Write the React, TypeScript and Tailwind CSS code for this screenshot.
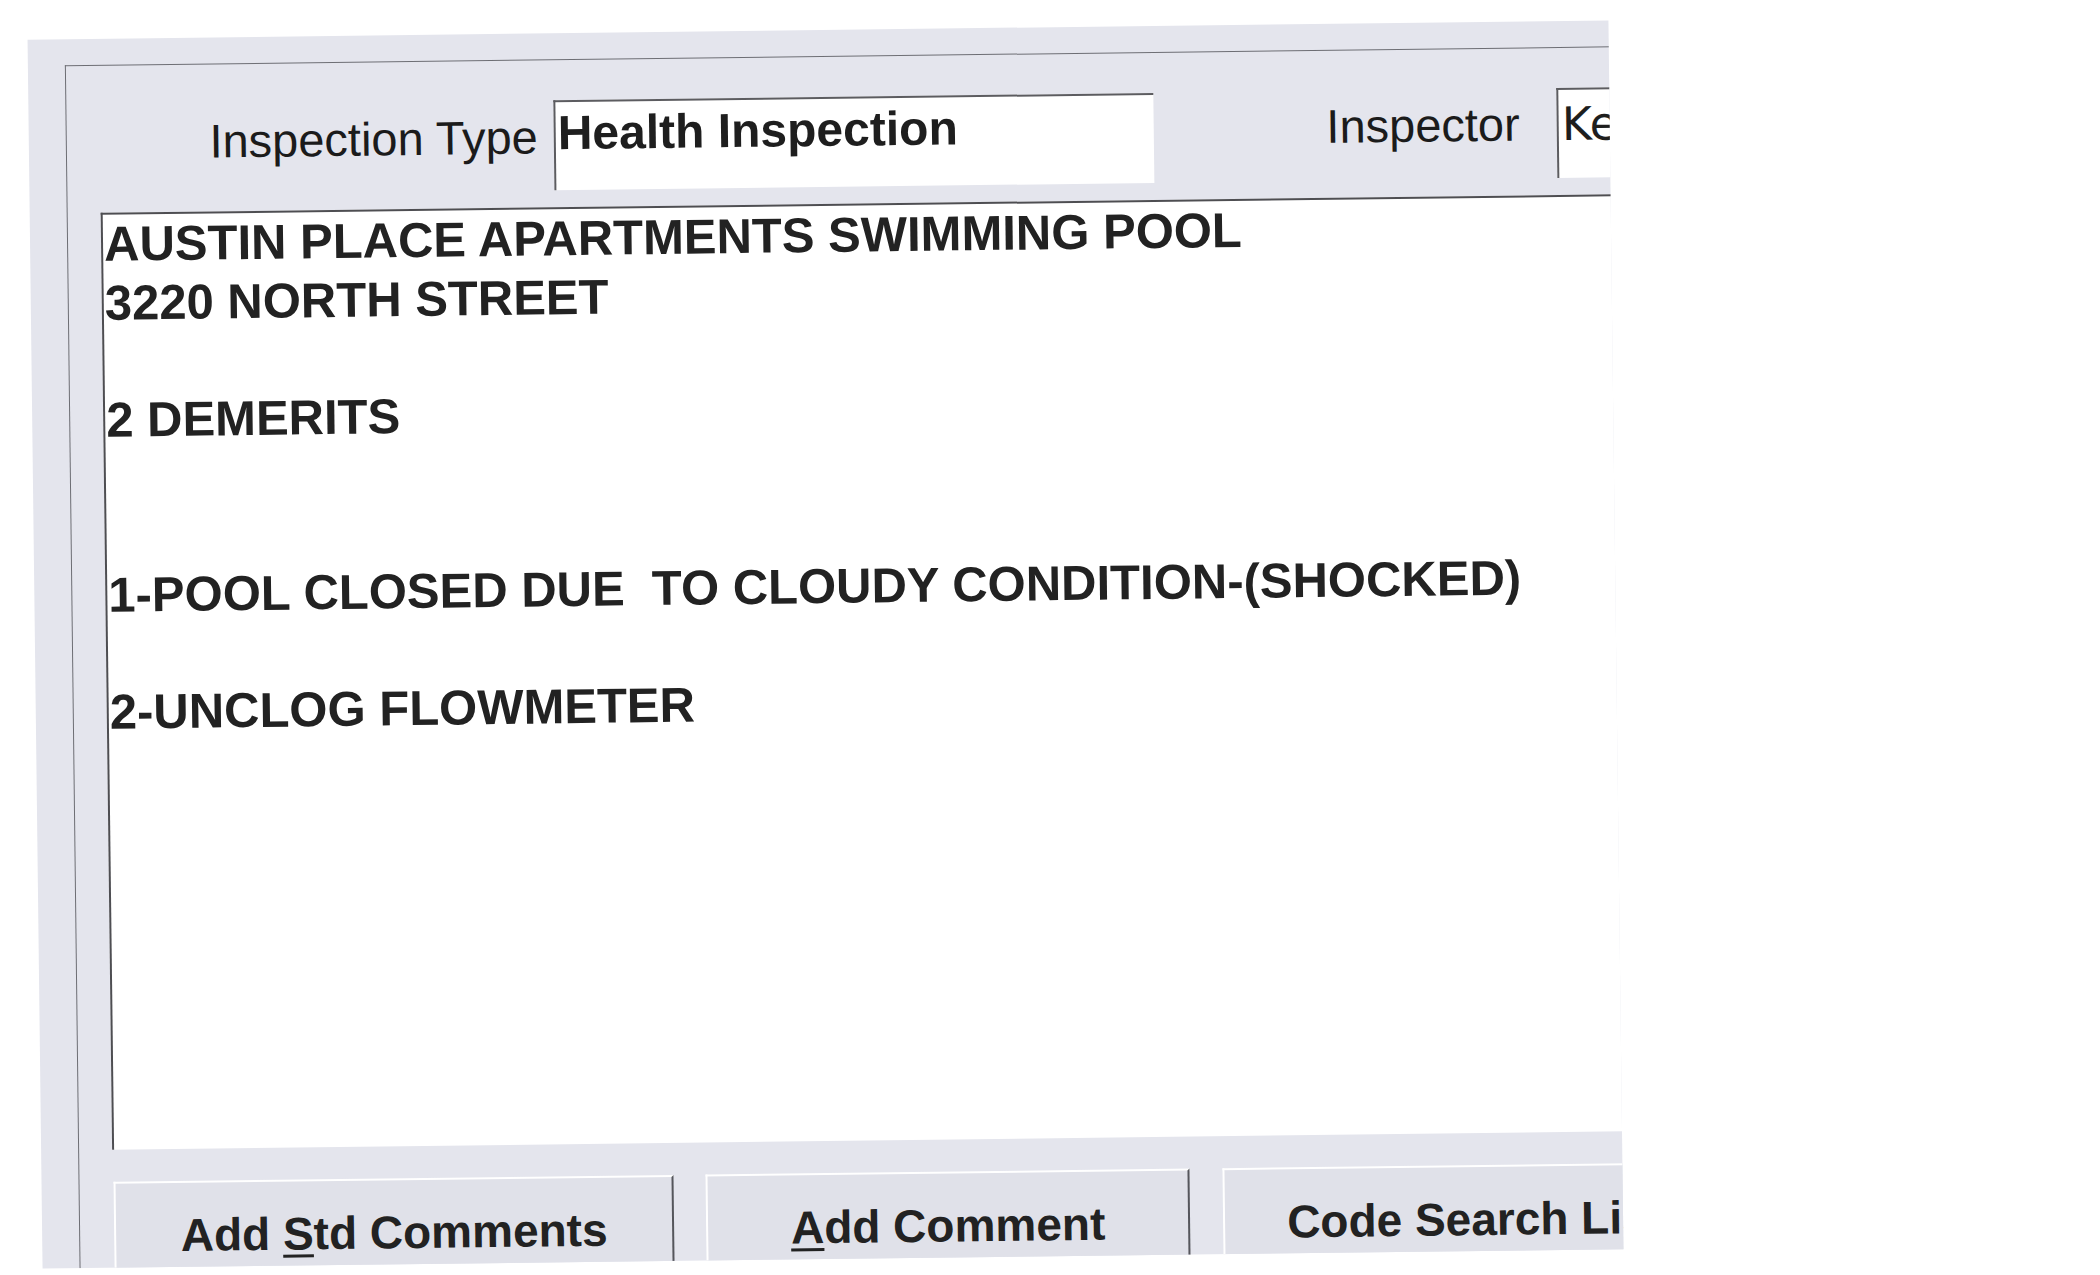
export default function App() {
  const lines = [
    "AUSTIN PLACE APARTMENTS SWIMMING POOL",
    "3220 NORTH STREET",
    "",
    "2 DEMERITS",
    "",
    "",
    "1-POOL CLOSED DUE  TO CLOUDY CONDITION-(SHOCKED)",
    "",
    "2-UNCLOG FLOWMETER",
  ];

  return (
    <div className="min-h-screen w-full overflow-hidden bg-white" style={{ fontFamily: '"Liberation Sans", Arial, sans-serif' }}>
      <div className="pl-[35px] pt-[30px]">
        {/* scanned window: slightly rotated, cropped on the right and bottom */}
        <div className="h-[1229px] w-[1581px] rotate-[-0.7deg] overflow-hidden bg-[#e4e5ed] pl-[37px] pt-[26px]">
          <div className="h-[1400px] w-[1800px] border-l border-t border-[#6d6e74] pt-[40px]">
            {/* header row */}
            <div className="flex items-start">
              <div className="mt-[10px] w-[471px] shrink-0 text-right text-[47px] leading-[54px] text-[#1b1b1b]">Inspection Type</div>
              <div className="ml-[16px] h-[90px] w-[600px] shrink-0 border-l-2 border-t-2 border-[#5c5c60] bg-white pl-[2px] pt-[4px] text-[48px] font-bold leading-[54px] text-[#1e1e1e]">
                Health Inspection
              </div>
              <div className="mt-[9px] w-[366px] shrink-0 text-right text-[47px] leading-[54px] text-[#1b1b1b]">Inspector</div>
              <div
                className="ml-[37px] h-[90px] w-[300px] shrink-0 border-l-2 border-t-2 border-[#5c5c60] bg-white pl-[3px] pt-[7px] text-[46px] leading-[54px] text-[#1e1e1e]"
                style={{ fontFamily: '"DejaVu Sans", sans-serif' }}
              >
                Ke
              </div>
            </div>

            {/* comments text area */}
            <div className="ml-[33px] mt-[17px] h-[937px] w-[1600px] border-l-2 border-t-2 border-[#4e4e52] bg-white pl-[1px] pt-0 text-[49px] font-bold leading-[58.5px] text-[#222]">
              {lines.map((l, i) => (
                <div key={i} className="h-[58.5px] whitespace-pre">
                  {l}
                </div>
              ))}
            </div>

            {/* buttons */}
            <div className="ml-[34px] mt-[32px] flex gap-[32px] text-[46px] font-bold leading-[54px] text-[#222]">
              <div className="h-[100px] w-[560px] shrink-0 border-l-2 border-r-2 border-t-2 border-l-white border-r-[#55565c] border-t-white bg-[#e0e1e9] pt-[25px] text-center">
                Add <span className="underline decoration-[3px] underline-offset-[5px]">S</span>td Comments
              </div>
              <div className="h-[100px] w-[484px] shrink-0 border-l-2 border-r-2 border-t-2 border-l-white border-r-[#55565c] border-t-white bg-[#e0e1e9] pt-[25px] text-center">
                <span className="underline decoration-[3px] underline-offset-[5px]">A</span>dd Comment
              </div>
              <div className="ml-[1px] h-[100px] w-[504px] shrink-0 border-l-2 border-r-2 border-t-2 border-l-white border-r-[#55565c] border-t-white bg-[#e0e1e9] pt-[25px] text-center">
                Code Search List
              </div>
            </div>
          </div>
        </div>
      </div>
    </div>
  );
}
